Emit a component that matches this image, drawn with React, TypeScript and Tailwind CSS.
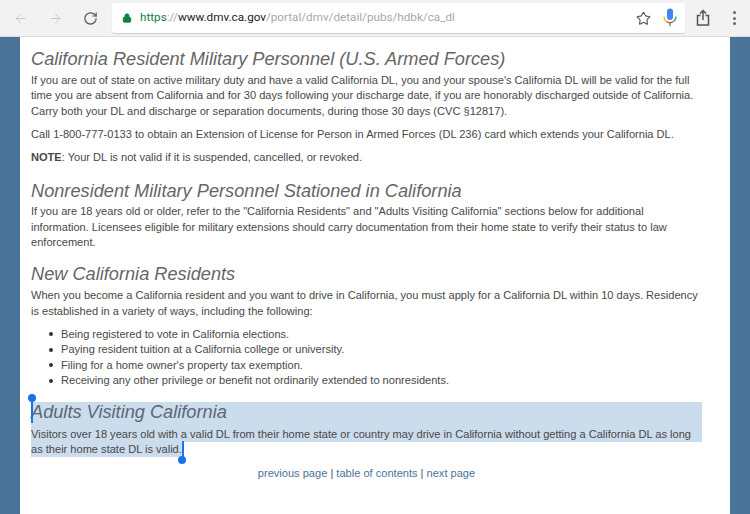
import { ArrowLeft, ArrowRight, Lock, RotateCw, Star } from 'lucide-react'

function MicIcon() {
  return (
    <svg width="14" height="20" viewBox="0 0 14 20" fill="none">
      <rect x="4" y="0.5" width="6" height="11.5" rx="3" fill="#4285f4" />
      <path d="M1 8.5a6 6 0 0 0 2.5 5" stroke="#fbbc05" strokeWidth="1.4" />
      <path d="M3.5 13.5a6 6 0 0 0 7 0" stroke="#ea4335" strokeWidth="1.4" />
      <path d="M13 8.5a6 6 0 0 1-2.5 5" stroke="#34a853" strokeWidth="1.4" />
      <path d="M7 15v3" stroke="#34a853" strokeWidth="1.4" />
    </svg>
  )
}

function ShareIcon() {
  return (
    <svg width="14" height="18" viewBox="0 0 14 18" fill="none" stroke="#555" strokeWidth="1.5">
      <path d="M4.5 6.5H1.5v9.5h11V6.5H9.5" />
      <path d="M7 11V1.5M4 4.5l3-3 3 3" />
    </svg>
  )
}

function Toolbar() {
  return (
    <div className="flex h-[37px] shrink-0 items-center border-b border-[#dcdcdc] bg-[#f2f2f2]">
      <div className="flex w-[112px] shrink-0 items-center pl-[13px]">
        <ArrowLeft className="h-[15px] w-[15px] text-[#c8c8c8]" strokeWidth={1.6} />
        <ArrowRight className="ml-[20px] h-[15px] w-[15px] text-[#c8c8c8]" strokeWidth={1.6} />
        <RotateCw className="ml-[20px] h-[15px] w-[15px] text-[#555]" strokeWidth={1.9} />
      </div>
      <div className="flex h-[30px] w-[573px] items-center rounded-[2px] bg-white pl-[10px] shadow-[0_1px_1px_rgba(0,0,0,0.15)]">
        <Lock className="h-[10px] w-[10px] fill-[#0b8043] text-[#0b8043]" strokeWidth={2} />
        <span className="ml-[8px] font-['Roboto',sans-serif] text-[11.7px] whitespace-nowrap text-[#a8a8a8]">
          <span className="text-[#0b8043]">https</span>://<span className="text-[#222]">www.dmv.ca.gov</span>/portal/dmv/detail/pubs/hdbk/ca_dl
        </span>
        <div className="ml-auto flex items-center pr-[8px]">
          <Star className="h-[15px] w-[15px] text-[#555]" strokeWidth={1.8} />
          <span className="ml-[12px]"><MicIcon /></span>
        </div>
      </div>
      <div className="ml-[11px]"><ShareIcon /></div>
      <div className="ml-[23px] flex flex-col gap-[2.5px]">
        <span className="h-[3px] w-[3px] rounded-full bg-[#666]" />
        <span className="h-[3px] w-[3px] rounded-full bg-[#666]" />
        <span className="h-[3px] w-[3px] rounded-full bg-[#666]" />
      </div>
    </div>
  )
}

function Heading({ children }: { children: React.ReactNode }) {
  return <h2 className="text-[18.2px] leading-[24px] font-normal text-[#666] italic">{children}</h2>
}

function Bullet({ children }: { children: React.ReactNode }) {
  return (
    <li className="flex items-center gap-[8px]">
      <span className="h-[4px] w-[4px] shrink-0 rounded-full bg-[#333]" />
      {children}
    </li>
  )
}

export default function App() {
  return (
    <div className="flex h-[514px] w-[750px] flex-col overflow-hidden bg-[#4a7398] font-['Liberation_Sans',Arial,sans-serif]">
      <Toolbar />
      <main className="mx-[20px] flex-1 bg-white pt-[10px] pr-[28px] pl-[11px] text-[11.07px] leading-[15.5px] text-[#484848]">
        <Heading>California Resident Military Personnel (U.S. Armed Forces)</Heading>
        <p className="mt-[1.5px]">
          If you are out of state on active military duty and have a valid California DL, you and your spouse's California DL will be valid for the full<br />
          time you are absent from California and for 30 days following your discharge date, if you are honorably discharged outside of California.<br />
          Carry both your DL and discharge or separation documents, during those 30 days (CVC §12817).
        </p>
        <p className="mt-[8px]">Call 1-800-777-0133 to obtain an Extension of License for Person in Armed Forces (DL 236) card which extends your California DL.</p>
        <p className="mt-[7.5px]"><b>NOTE</b>: Your DL is not valid if it is suspended, cancelled, or revoked.</p>

        <div className="mt-[13px]"><Heading>Nonresident Military Personnel Stationed in California</Heading></div>
        <p className="mt-[1.5px]">
          If you are 18 years old or older, refer to the "California Residents" and "Adults Visiting California" sections below for additional<br />
          information. Licensees eligible for military extensions should carry documentation from their home state to verify their status to law<br />
          enforcement.
        </p>

        <div className="mt-[11px]"><Heading>New California Residents</Heading></div>
        <p className="mt-[2.5px]">
          When you become a California resident and you want to drive in California, you must apply for a California DL within 10 days. Residency<br />
          is established in a variety of ways, including the following:
        </p>
        <ul className="mt-[7.5px] pl-[18px]">
          <Bullet>Being registered to vote in California elections.</Bullet>
          <Bullet>Paying resident tuition at a California college or university.</Bullet>
          <Bullet>Filing for a home owner's property tax exemption.</Bullet>
          <Bullet>Receiving any other privilege or benefit not ordinarily extended to nonresidents.</Bullet>
        </ul>

        <div className="relative mt-[13.5px]">
          <div className="bg-[#cbdcec] pb-[4px]">
            <h2 className="text-[18.2px] leading-[20px] font-normal text-[#5c6874] italic">Adults Visiting California</h2>
          </div>
          <p>
            <span className="block h-[15.5px] bg-[#cbdcec] pt-[1px]">Visitors over 18 years old with a valid DL from their home state or country may drive in California without getting a California DL as long</span>
            <span className="inline-block bg-[#cbdcec]">as their home state DL is valid.</span>
          </p>
          <span className="absolute top-[-4px] left-0 h-[25px] w-[1.5px] bg-[#1a73e8]" />
          <span className="absolute top-[-8px] left-[-3px] h-[8px] w-[8px] rounded-full bg-[#1a73e8]" />
          <span className="absolute top-[39px] left-[151px] h-[19px] w-[1.5px] bg-[#1a73e8]" />
          <span className="absolute top-[54px] left-[147px] h-[8px] w-[8px] rounded-full bg-[#1a73e8]" />
        </div>

        <p className="mt-[8.5px] text-center text-[#4a7398]">
          previous page <span className="text-[#555]">|</span> table of contents <span className="text-[#555]">|</span> next page
        </p>
      </main>
    </div>
  )
}
